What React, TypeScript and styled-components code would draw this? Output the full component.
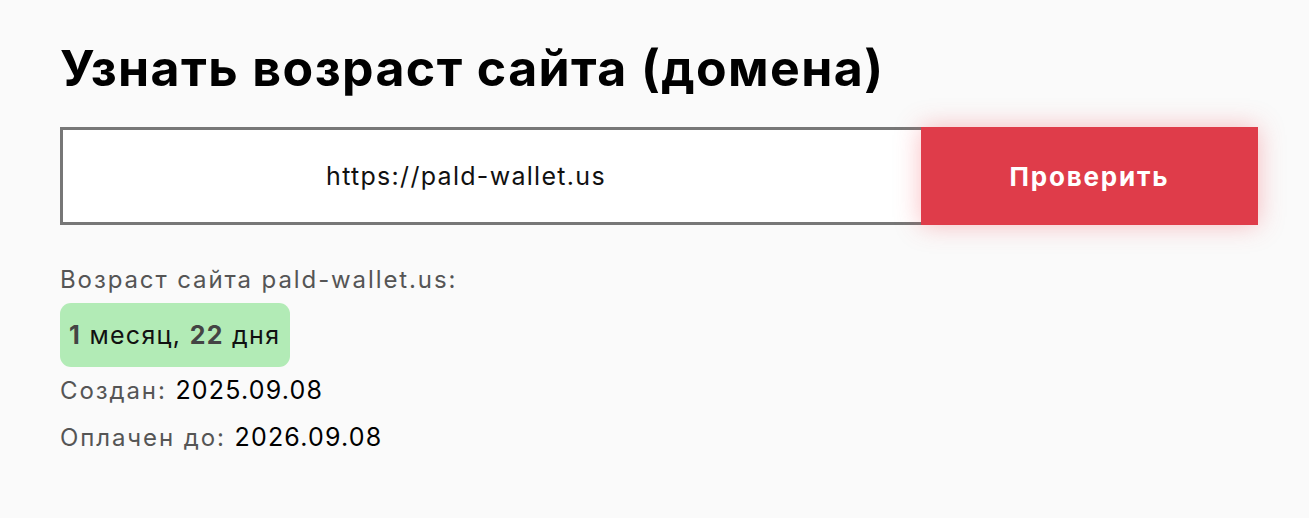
import styled, { createGlobalStyle } from 'styled-components';

const GlobalStyle = createGlobalStyle`
  html, body {
    margin: 0;
    padding: 0;
    background: #fafafa;
    font-family: Inter, 'Noto Sans', sans-serif;
  }
`;

const Page = styled.div`
  padding: 33px 51px 0 60px;
`;

const Title = styled.h1`
  margin: 0 0 24px;
  font-size: 50px;
  font-weight: 700;
  letter-spacing: 1.4px;
  line-height: 70px;
  color: #000;
`;

const Form = styled.form`
  display: flex;
  height: 98px;
`;

const UrlInput = styled.input`
  flex: 1;
  box-sizing: border-box;
  height: 100%;
  padding: 0 52px 0 0;
  border: 3px solid #777;
  border-right: none;
  background: #fff;
  text-align: center;
  font-family: inherit;
  font-size: 25px;
  letter-spacing: 1.3px;
  color: #111;
  outline: none;
`;

const CheckButton = styled.button`
  width: 337px;
  height: 100%;
  border: none;
  background: #df3c4a;
  color: #fff;
  font-family: inherit;
  font-size: 26px;
  font-weight: 700;
  letter-spacing: 1.8px;
  box-shadow: 0 0 24px rgba(240, 70, 80, 0.35);
  cursor: pointer;
`;

const Result = styled.div`
  display: flex;
  flex-direction: column;
  align-items: flex-start;
  margin-top: 38px;
  font-size: 24px;
  letter-spacing: 1.9px;
  color: #555;
`;

const Line = styled.div<{ $gap?: number }>`
  line-height: 34px;
  margin-bottom: ${(p) => p.$gap ?? 0}px;
`;

const Value = styled.span`
  color: #000;
  font-size: 25px;
  letter-spacing: 1.2px;
`;

const AgeBadge = styled.div`
  margin: 6px 0 6px;
  padding: 0 10px 0 9px;
  height: 64px;
  display: flex;
  align-items: center;
  background: #b2ebb6;
  border-radius: 11px;
  font-size: 25px;
  letter-spacing: 1.3px;
  color: #111;
`;

const Num = styled.b`
  color: #444;
  font-weight: 700;
`;

export default function App() {
  return (
    <>
      <GlobalStyle />
      <Page>
        <Title>Узнать возраст сайта (домена)</Title>
        <Form onSubmit={(e) => e.preventDefault()}>
          <UrlInput defaultValue="https://pald-wallet.us" />
          <CheckButton type="submit">Проверить</CheckButton>
        </Form>
        <Result>
          <Line>Возраст сайта pald-wallet.us:</Line>
          <AgeBadge>
            <span>
              <Num>1</Num> месяц, <Num>22</Num> дня
            </span>
          </AgeBadge>
          <Line $gap={12}>
            Создан: <Value>2025.09.08</Value>
          </Line>
          <Line>
            Оплачен до: <Value>2026.09.08</Value>
          </Line>
        </Result>
      </Page>
    </>
  );
}
